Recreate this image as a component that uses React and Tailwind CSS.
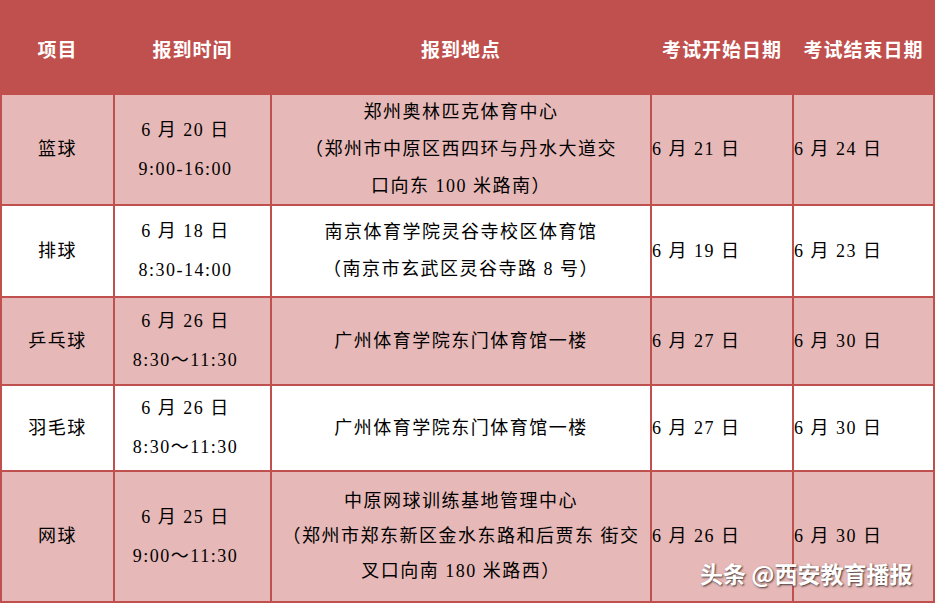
import React from 'react';

const rows = [
    {
        name: '篮球',
        time: ['6 月 20 日', '9:00-16:00'],
        place: ['郑州奥林匹克体育中心', '（郑州市中原区西四环与丹水大道交', '口向东 100 米路南）'],
        start: '6 月 21 日',
        end: '6 月 24 日',
        h: 'h-[109px]',
        lh: 'leading-[37px]',
        pink: true,
    },
    {
        name: '排球',
        time: ['6 月 18 日', '8:30-14:00'],
        place: ['南京体育学院灵谷寺校区体育馆', '（南京市玄武区灵谷寺路 8 号）'],
        start: '6 月 19 日',
        end: '6 月 23 日',
        h: 'h-[90px]',
        lh: 'leading-[37px]',
        pink: false,
    },
    {
        name: '乒乓球',
        time: ['6 月 26 日', '8:30〜11:30'],
        place: ['广州体育学院东门体育馆一楼'],
        start: '6 月 27 日',
        end: '6 月 30 日',
        h: 'h-[86px]',
        lh: 'leading-[37px]',
        pink: true,
    },
    {
        name: '羽毛球',
        time: ['6 月 26 日', '8:30〜11:30'],
        place: ['广州体育学院东门体育馆一楼'],
        start: '6 月 27 日',
        end: '6 月 30 日',
        h: 'h-[84px]',
        lh: 'leading-[37px]',
        pink: false,
    },
    {
        name: '网球',
        time: ['6 月 25 日', '9:00〜11:30'],
        place: ['中原网球训练基地管理中心', '（郑州市郑东新区金水东路和后贾东 街交', '叉口向南 180 米路西）'],
        start: '6 月 26 日',
        end: '6 月 30 日',
        h: 'h-[129px]',
        lh: 'leading-[35px]',
        pink: true,
    },
];

const headers = ['项目', '报到时间', '报到地点', '考试开始日期', '考试结束日期'];

const App = () => {
    return (
        <div className="relative w-[935px] h-[604px] bg-white overflow-hidden">
            <div className="grid grid-cols-[111px_155px_378px_140px_139px] gap-[2px] bg-[#c0504d] p-[2px] text-black font-['Liberation_Serif','Noto_Sans_CJK_SC',serif] text-[18px] tracking-[1.5px]">
                {/* header */}
                {headers.map((h) => (
                    <div
                        key={h}
                        className="h-[91px] flex items-center justify-center pt-[3px] whitespace-nowrap text-white font-bold text-[19px] tracking-[1px] font-['Noto_Sans_CJK_SC',sans-serif]"
                    >
                        {h}
                    </div>
                ))}

                {rows.map((r) => {
                    const bg = r.pink ? 'bg-[#e6b8b7]' : 'bg-white';
                    return (
                        <React.Fragment key={r.name}>
                            <div className={`${r.h} ${bg} flex items-center justify-center`}>
                                {r.name}
                            </div>
                            <div className={`${r.h} ${bg} flex flex-col items-center justify-center leading-[39px] pr-[14px]`}>
                                {r.time.map((t) => (
                                    <span key={t} className="whitespace-nowrap">{t}</span>
                                ))}
                            </div>
                            <div className={`${r.h} ${bg} flex flex-col items-center justify-center ${r.lh}`}>
                                {r.place.map((p) => (
                                    <span key={p} className="whitespace-nowrap">{p}</span>
                                ))}
                            </div>
                            <div className={`${r.h} ${bg} flex items-center whitespace-nowrap`}>
                                {r.start}
                            </div>
                            <div className={`${r.h} ${bg} flex items-center whitespace-nowrap`}>
                                {r.end}
                            </div>
                        </React.Fragment>
                    );
                })}
            </div>

            {/* watermark */}
            <div className="absolute left-[700px] top-[556px] text-white text-[23px] font-semibold whitespace-nowrap font-['Noto_Sans_CJK_SC',sans-serif] [text-shadow:1px_1px_2px_rgba(0,0,0,0.7)]">
                头条 @西安教育播报
            </div>
        </div>
    );
};

export default App;
